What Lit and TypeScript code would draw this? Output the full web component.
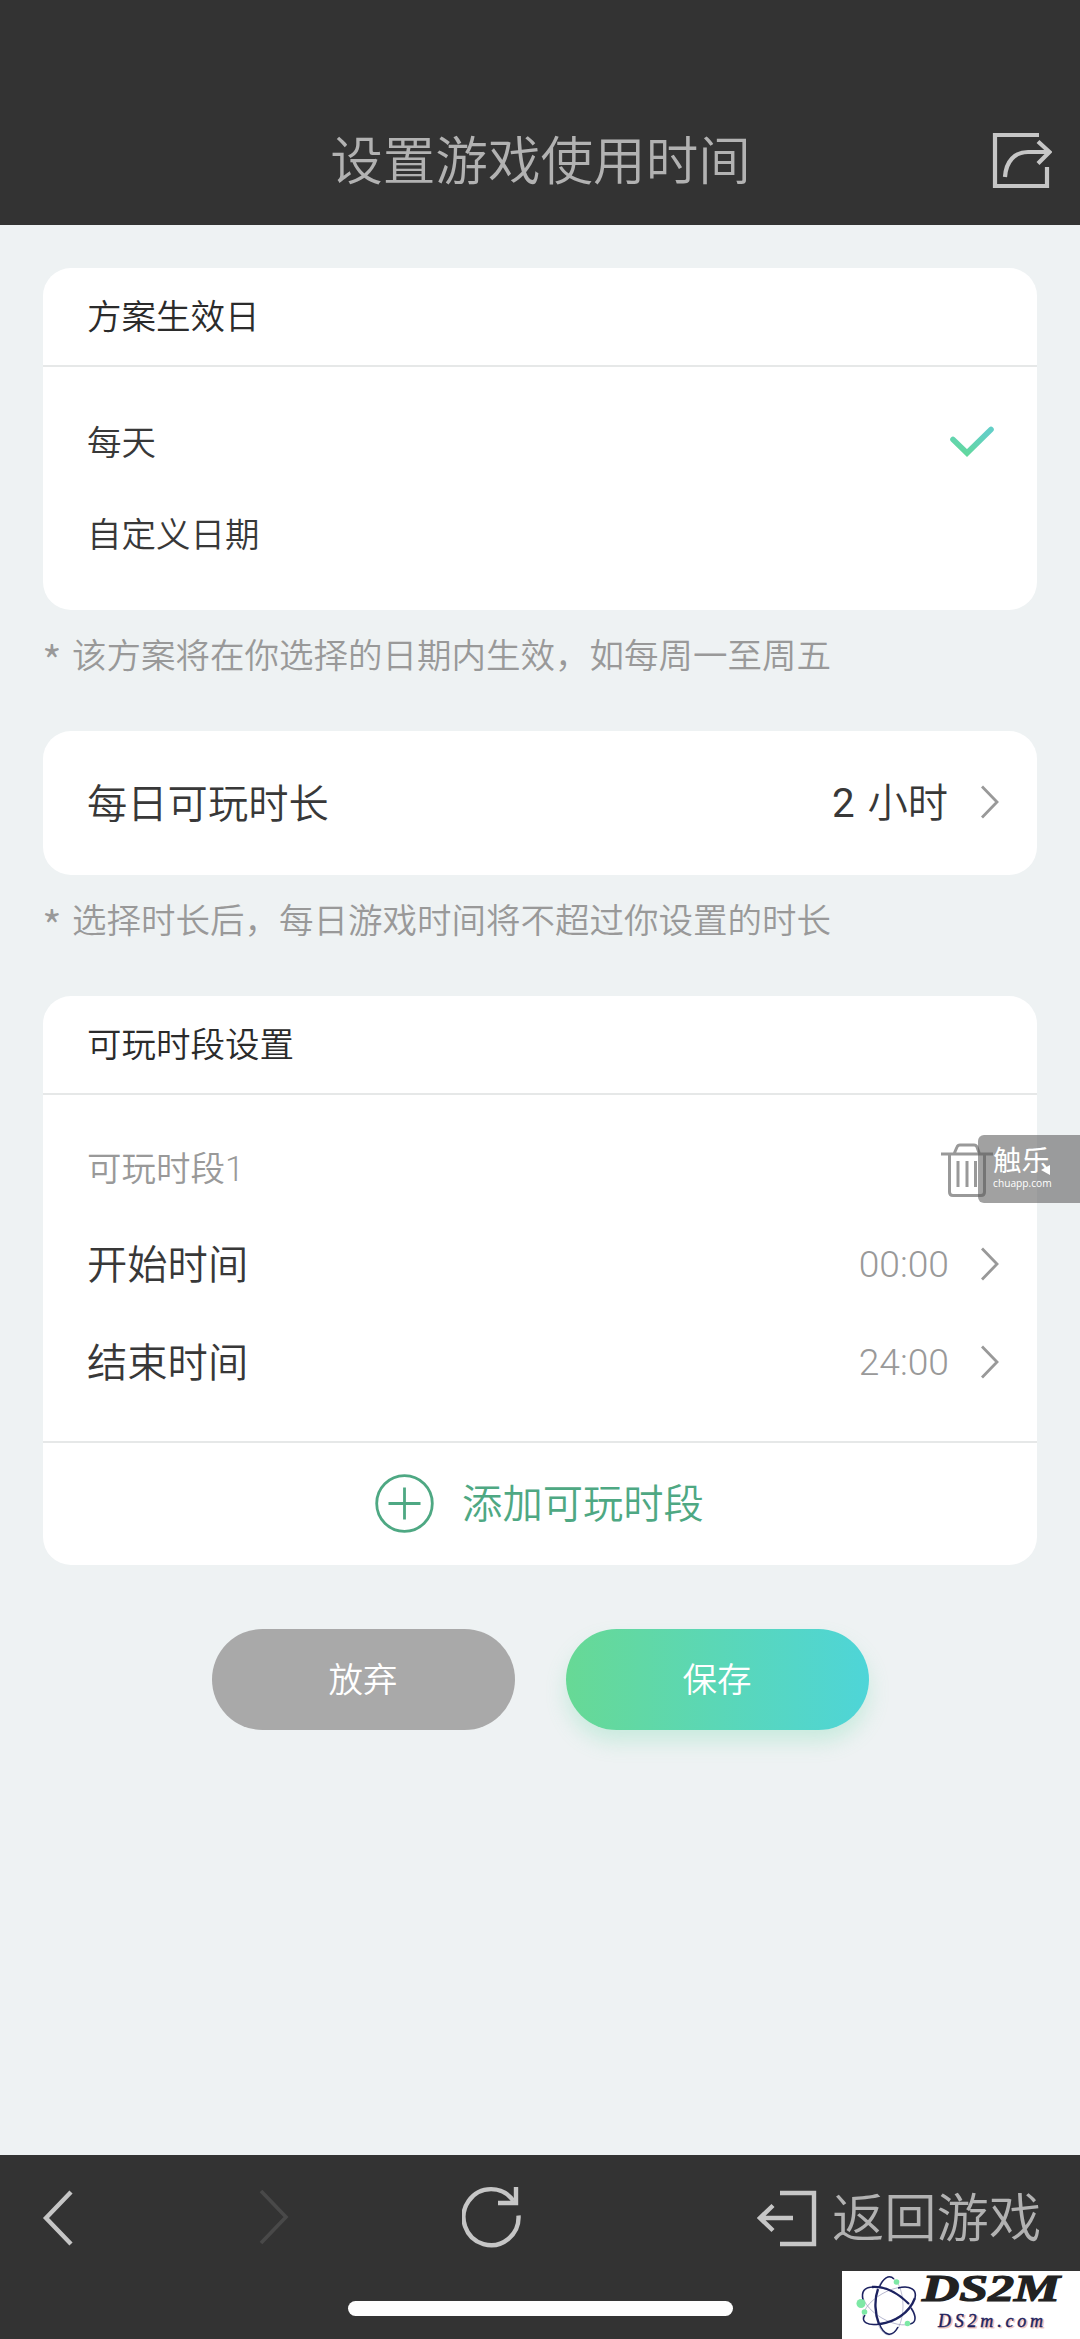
import { LitElement, html, css, svg } from "lit";
import { customElement, state } from "lit/decorators.js";

const chevron = html`<svg class="chev" width="18" height="34" viewBox="0 0 18 34" fill="none" stroke="#999" stroke-width="2.8"><path d="M1 1.5L16 17L1 32.5"/></svg>`;

const electron = (x: number, y: number, r: number) => svg`<circle cx=${x} cy=${y} r=${r} fill="#7de8a5"/>`;

@customElement("app-root")
export class AppRoot extends LitElement {
  @state() private hours = 2;
  @state() private slots = [{ start: "00:00", end: "24:00" }];

  static styles = css`
    :host {
      display: block;
      font-family: Roboto, "Noto Sans CJK SC", sans-serif;
      font-weight: 350;
      color: #383838;
    }
    * { box-sizing: border-box; }
    svg { display: block; flex: none; }
    .screen {
      position: relative;
      display: flex;
      flex-direction: column;
      height: 2339px;
      width: 1080px;
      background: #eef2f3;
      overflow: hidden;
    }
    header {
      display: grid;
      grid-template-columns: 1fr auto 1fr;
      align-items: center;
      height: 225px;
      padding: 97px 28px 0 29px;
      background: #333;
      color: #b2b2b2;
      flex: none;
    }
    .title { grid-column: 2; font-size: 52.6px; line-height: 60px; white-space: nowrap; padding-top: 2px; }
    .share { justify-self: end; }
    main { flex: 1; padding: 43px 43px 0; }
    .card { background: #fff; border-radius: 28px; }
    .head {
      height: 99px;
      display: flex;
      align-items: center;
      padding: 0 44px 5px;
      font-size: 34.5px;
      border-bottom: 2px solid #e6e8e8;
      color: #2b2b2b;
    }
    .days { padding: 28px 42px 29px 44px; height: 243px; }
    .row { display: flex; align-items: center; justify-content: space-between; }
    .days .row { height: 92px; font-size: 34.5px; }
    .days span, .label span { padding-bottom: 3px; }
    .hint {
      display: flex;
      font-family: "Noto Sans CJK SC", sans-serif;
      font-size: 34.5px;
      line-height: 40px;
      color: #999;
      padding-top: 23px;
      height: 121px;
      white-space: nowrap;
    }
    .star { width: 30px; font-size: 43px; line-height: 52px; margin-left: -1px; flex: none; }
    .big { font-size: 40.3px; padding: 0 38px 0 44px; }
    .big .name, .add span { padding-bottom: 6px; }
    .duration { height: 144px; padding-bottom: 3px; }
    .duration .name { padding-bottom: 3px; }
    .value { display: flex; align-items: center; gap: 33px; }
    .amount { padding-bottom: 4px; word-spacing: 3px; }
    .digit { font-weight: 400; }
    .slots { padding: 25px 0 30px; height: 346px; }
    .label { font-size: 34.5px; color: #999; height: 95px; padding: 0 44px 0 44px; }
    .label svg { position: relative; top: 2px; }
    .slots .big { height: 98px; }
    .time { font-size: 37.2px; color: #999; gap: 32px; font-weight: 350; }
    .add {
      display: flex;
      align-items: center;
      justify-content: center;
      gap: 28px;
      height: 124px;
      padding: 0 1px 2px 0;
      border-top: 2px solid #e6e8e8;
      font-size: 40.3px;
      color: #4ea883;
    }
    .actions { display: flex; justify-content: center; gap: 51px; padding-top: 64px; }
    .btn {
      display: flex;
      align-items: center;
      justify-content: center;
      width: 303px;
      height: 101px;
      padding-bottom: 5px;
      border-radius: 51px;
      font-size: 34.5px;
      color: #fff;
      background: #a9a9a9;
    }
    .save {
      background: linear-gradient(90deg, #67d995, #4ed5d8);
      box-shadow: 0 12px 20px rgba(95, 215, 165, 0.25);
    }
    footer {
      position: relative;
      display: flex;
      align-items: flex-start;
      height: 184px;
      padding: 29px 0 0 42px;
      background: #333;
      color: #b2b2b2;
      flex: none;
    }
    .fwd { margin-left: 185px; }
    .reload { margin-left: 173px; }
    .exit { display: flex; align-items: center; gap: 15px; margin-left: 235px; font-size: 52.3px; line-height: 66px; white-space: nowrap; }
    .exit span { padding-top: 2px; }
    .home {
      position: absolute;
      left: 348px;
      bottom: 23px;
      width: 385px;
      height: 15px;
      border-radius: 8px;
      background: #fdfdfd;
    }
    .chuapp {
      position: absolute;
      left: 978px;
      top: 1135px;
      width: 102px;
      height: 68px;
      padding: 11px 0 0 15px;
      border-radius: 6px 0 0 6px;
      background: rgba(90, 90, 90, 0.57);
      color: #fff;
    }
    .chuapp-name { font-size: 28.5px; line-height: 32px; font-weight: 400; }
    .chuapp-url { font-family: "Open Sans", "Noto Sans", sans-serif; font-size: 10.2px; line-height: 10px; font-weight: 400; }
    .arrow { position: absolute; left: 63px; top: 30px; }
    .ds2m {
      position: absolute;
      left: 842px;
      bottom: 0;
      width: 238px;
      height: 68px;
      background: #fff;
      overflow: visible;
    }
  `;

  private renderHeader() {
    return html`<header>
      <div class="title">设置游戏使用时间</div>
      <svg class="share" width="60" height="58" viewBox="0 0 60 58" fill="none" stroke="#c6c6c6" stroke-width="4.200">
        <path d="M47 3H3V54H55V35"/>
        <path d="M13 45C14 29 23 20 36 20H57M46 9.5L57.5 20L46 31.5"/>
      </svg>
    </header>`;
  }

  private renderHint(text: string) {
    return html`<div class="hint"><span class="star">*</span><span>${text}</span></div>`;
  }

  private renderSlot(slot: { start: string; end: string }, i: number) {
    return html`
      <div class="row label">
        <span>可玩时段${i + 1}</span>
        <svg width="52" height="54" viewBox="0 0 52 54" fill="none" stroke="#999" stroke-width="3">
          <path d="M0 11H52M13 11L16 4Q16.8 2 19 2H33Q35.2 2 36 4L38.5 11M8.5 11V49Q8.5 52.5 12 52.5H40Q43.500 52.500 43.500 49V11M17 18V44M26 18V44M34.500 18V44"/>
        </svg>
      </div>
      <div class="row big"><span class="name">开始时间</span><span class="value time">${slot.start}${chevron}</span></div>
      <div class="row big"><span class="name">结束时间</span><span class="value time">${slot.end}${chevron}</span></div>`;
  }

  private renderFooter() {
    return html`<footer>
      <svg width="32" height="66" viewBox="0 0 32 66" fill="none" stroke="#c6c6c6" stroke-width="4.400"><path d="M29 8L4 34L29 60"/></svg>
      <svg class="fwd" width="30" height="66" viewBox="0 0 30 66" fill="none" stroke="#494949" stroke-width="3.6"><path d="M2 7L27 33L2 59"/></svg>
      <svg class="reload" width="60" height="66" viewBox="0 0 60 66" fill="none" stroke="#c6c6c6" stroke-width="4.400">
        <path d="M56.500 31.500A27.500 28 0 1 1 51.500 17"/><path d="M54 3V19H36"/>
      </svg>
      <div class="exit">
        <svg width="60" height="66" viewBox="0 0 60 66" fill="none" stroke="#c6c6c6" stroke-width="4.400">
          <path d="M23 8H57V59H23M36 33H3M16 20.500L3 33L16 45.500"/>
        </svg>
        <span>返回游戏</span>
      </div>
      <div class="home"></div>
    </footer>`;
  }

  private renderLogo() {
    return html`<svg class="ds2m" viewBox="0 0 238 68">
      <g fill="none" stroke="#1c2260">
        <g stroke-width="0.700" stroke="#a3a5c2">
          <ellipse cx="47" cy="35" rx="14" ry="29"/>
          <ellipse cx="47" cy="35" rx="14" ry="29" transform="rotate(60 47 35)"/>
          <ellipse cx="47" cy="35" rx="14" ry="29" transform="rotate(120 47 35)"/>
        </g>
        <g stroke-width="1.500">
          <path d="M52 8C47 3 41 7 37 17M37 52C42 65 50 67 56 56"/>
          <path d="M21 29C19 21 22 16 31 16M69 37C75 46 74 52 68 53"/>
          <path d="M56 17C69 14 75 19 73 27M23 44C18 51 26 55 38 53"/>
        </g>
        <path stroke-width="2.300" d="M36 18C32 29 33 43 37 53M30 16C43 15 56 22 67 33M38 53C52 51 67 43 73 27"/>
      </g>
      ${electron(54.5, 11, 2.800)}${electron(19, 32.500, 4.500)}${electron(22.5, 41, 2.800)}${electron(65.5, 52.5, 2.800)}
      <text x="80" y="30" textLength="138" lengthAdjust="spacingAndGlyphs" font-family="Liberation Serif, serif" font-weight="700" font-style="italic" font-size="38" fill="#222" stroke="#222" stroke-width="1.200">DS2M</text>
      <g font-family="Liberation Serif, serif" font-weight="400" font-style="italic" font-size="18" letter-spacing="3">
        <text x="97.500" y="57" textLength="108" fill="#eeb0a8" stroke="#f3c8c2">DS2m.com</text>
        <text x="96" y="56" textLength="108" fill="#1c2260" stroke="#1c2260" stroke-width="0.400">DS2m.com</text>
      </g>
    </svg>`;
  }

  render() {
    return html`<div class="screen">
      ${this.renderHeader()}
      <main>
        <section class="card">
          <div class="head">方案生效日</div>
          <div class="days">
            <div class="row">
              <span>每天</span>
              <svg width="46" height="32" viewBox="0 0 46 32" fill="none">
                <defs><linearGradient id="tick" x1="0" y1="1" x2="0.600" y2="0"><stop offset="0" stop-color="#62d99a"/><stop offset="1" stop-color="#63cfc6"/></linearGradient></defs>
                <path d="M4 14.500L18 28L42 4.500" stroke="url(#tick)" stroke-width="5.600" stroke-linecap="round"/>
              </svg>
            </div>
            <div class="row"><span>自定义日期</span></div>
          </div>
        </section>
        ${this.renderHint("该方案将在你选择的日期内生效，如每周一至周五")}
        <section class="card row big duration">
          <span class="name">每日可玩时长</span>
          <span class="value"><span class="amount"><span class="digit">${this.hours}</span> 小时</span>${chevron}</span>
        </section>
        ${this.renderHint("选择时长后，每日游戏时间将不超过你设置的时长")}
        <section class="card">
          <div class="head">可玩时段设置</div>
          <div class="slots">${this.slots.map((s, i) => this.renderSlot(s, i))}</div>
          <div class="add">
            <svg width="59" height="59" viewBox="0 0 59 59" fill="none" stroke="#4ea883" stroke-width="2.800"><circle cx="29.500" cy="29.500" r="27.800"/><path d="M13.500 29.500H45.500M29.500 13.500V45.500"/></svg>
            <span>添加可玩时段</span>
          </div>
        </section>
        <div class="actions"><div class="btn">放弃</div><div class="btn save">保存</div></div>
      </main>
      ${this.renderFooter()}
      <div class="chuapp">
        <div class="chuapp-name">触乐</div>
        <div class="chuapp-url">chuapp.com</div>
        <svg class="arrow" width="9" height="10" viewBox="0 0 9 10"><path d="M0 5L9 0V10Z" fill="#fff"/></svg>
      </div>
      ${this.renderLogo()}
    </div>`;
  }
}
